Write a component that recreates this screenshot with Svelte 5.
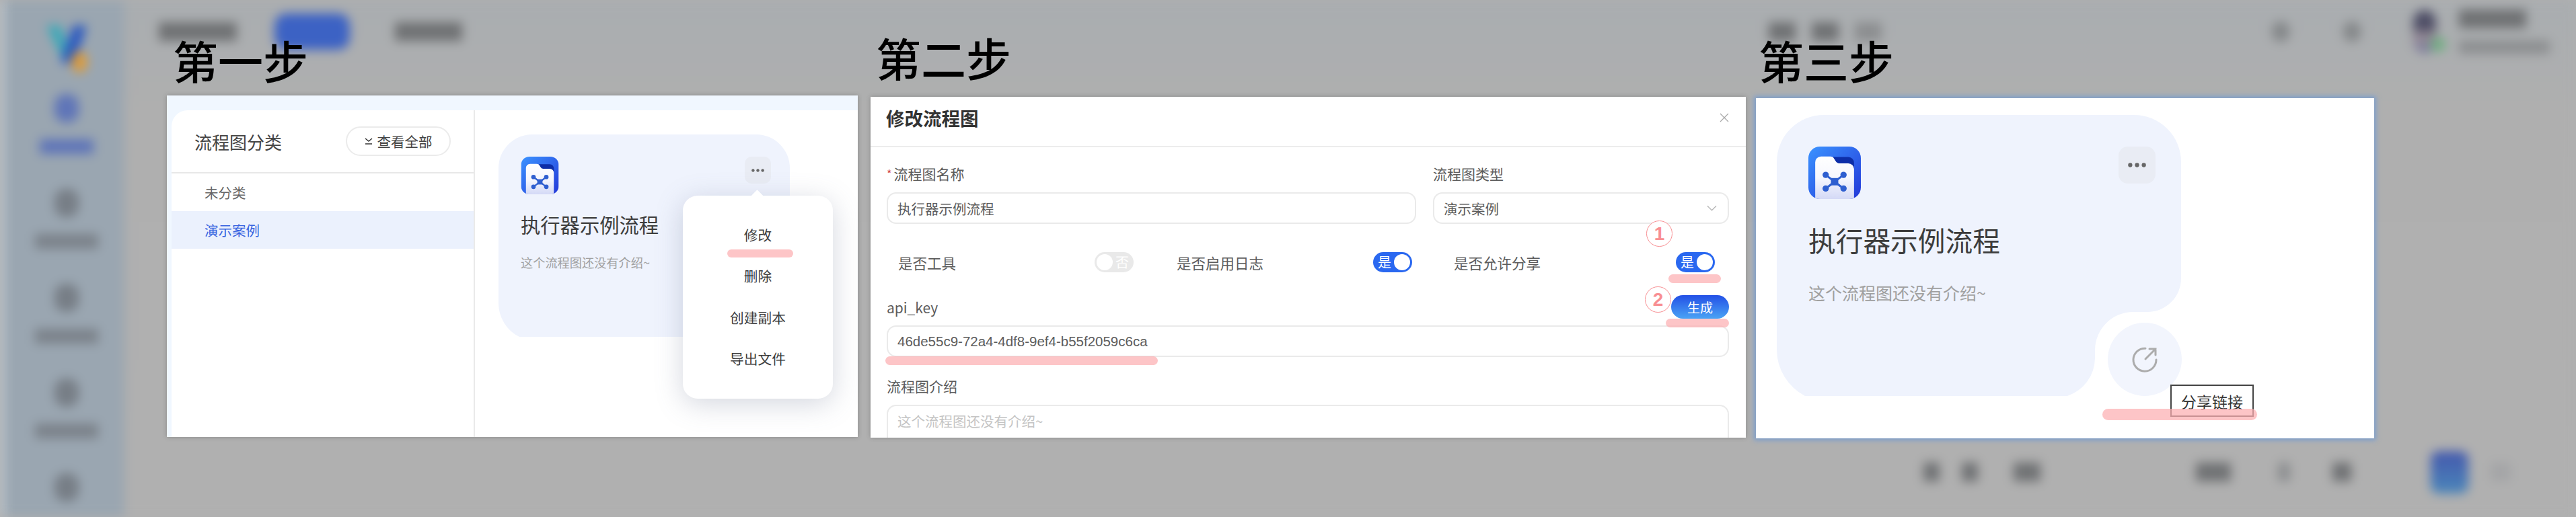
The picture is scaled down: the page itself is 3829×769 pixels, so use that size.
<script>
	const navItems = [
		{ label: '流程图', active: true },
		{ label: '智能体市场', active: false },
		{ label: '数据集', active: false },
		{ label: '知识库管理', active: false },
		{ label: '系统设置', active: false },
	];
	const menuItems = ['修改', '删除', '创建副本', '导出文件'];
	const toggles = [
		{ label: '是否工具', on: false },
		{ label: '是否启用日志', on: true },
		{ label: '是否允许分享', on: true },
	];
</script>

{#snippet flowIcon()}
	<svg class="flow-icon" viewBox="0 0 100 100">
		<defs>
			<linearGradient id="tile" x1="0" y1="0" x2="1" y2="1">
				<stop offset="0" stop-color="#3b93ff" />
				<stop offset="1" stop-color="#2338d8" />
			</linearGradient>
			<linearGradient id="sheet" x1="0" y1="0" x2="0" y2="1">
				<stop offset="0" stop-color="#ffffff" />
				<stop offset="0.5" stop-color="#f6f7fe" />
				<stop offset="1" stop-color="#d4d9f6" />
			</linearGradient>
			<clipPath id="tile-clip"><rect width="100" height="100" rx="22" /></clipPath>
		</defs>
		<g clip-path="url(#tile-clip)">
			<rect width="100" height="100" fill="url(#tile)" />
			<path d="M46 20 h30 a11 11 0 0 1 11 11 v10 H55 z" fill="#0d2ea8" />
			<path d="M13 100 V30 a11 11 0 0 1 11 -11 h18 a8 8 0 0 1 7 4 l3 5 a8 8 0 0 0 7 4 h17 a11 11 0 0 1 11 11 V100 z" fill="url(#sheet)" />
			<path d="M33 54 L67 80 M67 54 L33 80" stroke="#2f5fd0" stroke-width="4" />
			<g fill="#2f5fd0">
				<circle cx="33" cy="54" r="6" />
				<circle cx="67" cy="54" r="6" />
				<circle cx="33" cy="80" r="6" />
				<circle cx="67" cy="80" r="6" />
				<rect x="43" y="60" width="14" height="14" />
			</g>
		</g>
	</svg>
{/snippet}

{#snippet dots()}
	<svg class="dots" viewBox="0 0 24 6"><circle cx="3" cy="3" r="2.8" /><circle cx="12" cy="3" r="2.8" /><circle cx="21" cy="3" r="2.8" /></svg>
{/snippet}

<div class="page">
	<!-- blurred app behind the three steps -->
	<div class="backdrop">
		<aside class="side">
			<svg class="logo" viewBox="0 0 70 76">
				<path d="M5 4 L26 4 L40 46 L30 56 Z" fill="#3aa8b8" />
				<path d="M45 4 L65 4 L46 62 L26 58 Z" fill="#2a58c0" />
				<ellipse cx="54" cy="58" rx="12" ry="16" fill="#dc9c3c" />
			</svg>
			{#each navItems as item}
				<div class="nav" class:active={item.active}>
					<span class="nav-icon"></span>
					<span class="nav-label"></span>
				</div>
			{/each}
		</aside>
		<div class="main">
			<header class="top">
				<span class="blob w116"></span>
				<span class="pill"></span>
				<span class="blob w100"></span>
				<span class="top-mid">
					<span class="blob w40"></span>
					<span class="blob w40"></span>
					<span class="blob w40 faint"></span>
				</span>
				<span class="top-right">
					<span class="tool"></span>
					<span class="tool"></span>
					<span class="avatar"></span>
					<span class="who">
						<span class="blob w100"></span>
						<span class="blob w135 faint"></span>
					</span>
				</span>
			</header>
			<footer class="pager">
				<span class="blob w24"></span>
				<span class="blob w24"></span>
				<span class="blob w40 ml20"></span>
				<span class="gap-a"></span>
				<span class="blob w52"></span>
				<span class="blob w18 faint ml37"></span>
				<span class="blob w28 ml30"></span>
				<span class="gap-b"></span>
				<span class="page-on"></span>
				<span class="blob w30 fainter"></span>
			</footer>
		</div>
	</div>

	<h2 class="step s1">第一步</h2>
	<h2 class="step s2">第二步</h2>
	<h2 class="step s3">第三步</h2>

	<!-- step 1 -->
	<section class="shot one">
		<div class="inner">
			<div class="cats">
				<div class="cats-head">
					<span class="cats-title">流程图分类</span>
					<span class="see-all">
						<svg viewBox="0 0 12 10"><path d="M1 1 L6 5 L11 1 M1 9 H11" fill="none" stroke="#333" stroke-width="1.5" /></svg>
						查看全部
					</span>
				</div>
				<div class="cat">未分类</div>
				<div class="cat on">演示案例</div>
			</div>
			<div class="cards">
				<div class="card">
					<div class="card-top">
						{@render flowIcon()}
						<span class="more">{@render dots()}</span>
					</div>
					<div class="card-title">执行器示例流程</div>
					<div class="card-desc">这个流程图还没有介绍~</div>
				</div>
			</div>
		</div>
		<div class="menu">
			{#each menuItems as item}
				<div class="menu-item">{item}</div>
			{/each}
		</div>
		<span class="mark m-edit"></span>
	</section>

	<!-- step 2 -->
	<section class="shot two">
		<div class="dlg-head">
			<span>修改流程图</span>
			<svg viewBox="0 0 14 14"><path d="M1 1 L13 13 M13 1 L1 13" stroke="#a8a8a8" stroke-width="1.2" /></svg>
		</div>
		<div class="dlg-body">
			<div class="pair">
				<div class="field">
					<div class="lbl"><i>*</i>流程图名称</div>
					<div class="input">执行器示例流程</div>
				</div>
				<div class="field">
					<div class="lbl">流程图类型</div>
					<div class="input select">
						演示案例
						<svg viewBox="0 0 16 9"><path d="M1 1 L8 8 L15 1" fill="none" stroke="#b4b4b4" stroke-width="1.3" /></svg>
					</div>
				</div>
			</div>
			<div class="toggles">
				{#each toggles as t}
					<div class="tog-cell">
						<span>{t.label}</span>
						<span class="switch" class:on={t.on}>
							<span class="txt">{t.on ? '是' : '否'}</span>
							<span class="knob"></span>
						</span>
					</div>
				{/each}
			</div>
			<div class="key-row">
				<span class="lbl">api_key</span>
				<span class="gen">生成</span>
			</div>
			<div class="input">46de55c9-72a4-4df8-9ef4-b55f2059c6ca</div>
			<div class="lbl intro">流程图介绍</div>
			<div class="input area">这个流程图还没有介绍~</div>
		</div>
		<span class="mark m-switch"></span>
		<span class="mark m-gen"></span>
		<span class="mark m-key"></span>
		<span class="num n1">1</span>
		<span class="num n2">2</span>
	</section>

	<!-- step 3 -->
	<section class="shot three">
		<div class="big-card">
			<div class="card-top">
				{@render flowIcon()}
				<span class="more">{@render dots()}</span>
			</div>
			<div class="card-title">执行器示例流程</div>
			<div class="card-desc">这个流程图还没有介绍~</div>
		</div>
		<span class="share">
			<svg viewBox="0 0 38 38">
				<path d="M20 2.2 A17 17 0 1 0 36 19" fill="none" stroke="#acacac" stroke-width="3" stroke-linecap="round" />
				<path d="M20 18 L35 3 M26 3 H35 V12" fill="none" stroke="#acacac" stroke-width="3" stroke-linecap="round" />
			</svg>
		</span>
		<span class="tip">分享链接</span>
		<span class="mark m-share"></span>
	</section>
</div>

<style>
	:global(body) {
		margin: 0;
		background: #b0b0b0;
	}

	.page {
		position: relative;
		width: 3829px;
		height: 769px;
		overflow: hidden;
		font-family: "Noto Sans CJK SC", "Noto Sans", sans-serif;
		color: #333;
	}

	/* backdrop */
	.backdrop {
		display: flex;
		height: 769px;
		filter: blur(8px);
		background: #b0b0b0;
	}

	.side {
		width: 185px;
		height: 769px;
		flex: none;
		box-sizing: border-box;
		background: #9aa6b1;
		display: flex;
		flex-direction: column;
		align-items: center;
		padding: 34px 0 0 6px;
		overflow: hidden;
		border-left: 6px solid #c8d2da;
	}

	.logo {
		width: 70px;
		height: 76px;
		flex: none;
		margin-bottom: 30px;
	}

	.nav {
		height: 141px;
		display: flex;
		flex-direction: column;
		align-items: center;
		gap: 25px;
		flex: none;
	}

	.nav-icon {
		width: 36px;
		height: 42px;
		border-radius: 16px;
		background: #777e86;
	}

	.nav-label {
		width: 94px;
		height: 22px;
		background: #7b828a;
	}

	.nav.active .nav-icon,
	.nav.active .nav-label { background: #5f75b8; }
	.nav.active .nav-label { width: 80px; }

	.main {
		flex: 1;
		display: flex;
		flex-direction: column;
		justify-content: space-between;
		background: linear-gradient(#a9adb0, #afafaf 22%, #b0b0b0);
	}

	.top {
		display: flex;
		align-items: center;
		gap: 62px;
		height: 94px;
		padding: 0 39px 0 51px;
	}

	.blob {
		display: block;
		height: 28px;
		background: #707274;
		flex: none;
	}

	.blob.faint { background: #8c8e90; }
	.blob.fainter { background: #a4a5a7; }
	.w18 { width: 18px; }
	.w24 { width: 24px; }
	.w28 { width: 28px; }
	.w30 { width: 30px; }
	.w40 { width: 40px; }
	.w52 { width: 52px; }
	.w100 { width: 100px; }
	.w116 { width: 116px; }
	.w135 { width: 135px; height: 20px; }
	.ml20 { margin-left: 20px; }
	.ml30 { margin-left: 30px; }
	.ml37 { margin-left: 37px; }

	.pill {
		width: 112px;
		height: 54px;
		border-radius: 18px;
		background: #3c62c4;
		flex: none;
		margin-left: -6px;
		margin-right: 5px;
	}

	.top-mid {
		display: flex;
		gap: 24px;
		margin-left: 1880px;
	}

	.top-right {
		display: flex;
		align-items: center;
		margin-left: auto;
	}

	.tool {
		width: 26px;
		height: 30px;
		border-radius: 12px;
		background: #85888a;
		margin-right: 80px;
	}

	.avatar {
		position: relative;
		width: 34px;
		height: 64px;
		border-radius: 17px;
		background: linear-gradient(#4e4e66 40%, #9a8e98 60%, #76789c);
		margin: 0 34px 0 -2px;
	}

	.avatar::after {
		content: "";
		position: absolute;
		left: 26px;
		top: 40px;
		width: 22px;
		height: 22px;
		border-radius: 50%;
		background: #6fae80;
	}

	.who {
		display: flex;
		flex-direction: column;
		gap: 18px;
	}

	.pager {
		display: flex;
		align-items: center;
		gap: 33px;
		height: 134px;
		padding-left: 2674px;
	}

	.gap-a { width: 165px; }
	.gap-b { width: 52px; }

	.page-on {
		width: 56px;
		height: 63px;
		background: linear-gradient(#4458ad, #4a86ba);
		border-radius: 12px;
	}

	/* headings */
	.step {
		position: absolute;
		margin: 0;
		font-size: 67px;
		line-height: 78px;
		font-weight: 500;
		color: #000;
	}

	.s1 { left: 257px; top: 50px; }
	.s2 { left: 1302px; top: 46px; }
	.s3 { left: 2614px; top: 50px; }

	/* pasted screenshots */
	.shot {
		position: absolute;
		background: #fff;
		box-shadow: 0 0 6px rgba(60, 60, 60, 0.35);
		box-sizing: border-box;
	}

	.mark {
		position: absolute;
		background: rgba(252, 175, 178, 0.72);
		border-radius: 7px;
	}

	/* step 1 */
	.one {
		left: 248px;
		top: 142px;
		width: 1027px;
		height: 508px;
		background: #f0f7ff;
		padding: 22px 0 0 7px;
	}

	.inner {
		display: flex;
		height: 100%;
		background: #fff;
		border-top-left-radius: 24px;
	}

	.cats {
		width: 451px;
		flex: none;
		box-sizing: border-box;
		border-right: 2px solid #eaeaea;
	}

	.cats-head {
		height: 94px;
		box-sizing: border-box;
		display: flex;
		align-items: center;
		justify-content: space-between;
		padding: 0 34px;
		border-bottom: 2px solid #e8e8e8;
	}

	.cats-title { font-size: 26px; color: #444; }

	.see-all {
		width: 156px;
		height: 44px;
		box-sizing: border-box;
		border: 2px solid #ebebeb;
		border-radius: 22px;
		display: flex;
		align-items: center;
		justify-content: center;
		gap: 7px;
		font-size: 20.5px;
		color: #444;
	}

	.see-all svg { width: 12px; height: 10px; }

	.cat {
		height: 56px;
		display: flex;
		align-items: center;
		padding-left: 49px;
		font-size: 20.5px;
		color: #666;
	}

	.cat.on {
		background: #ebf1fd;
		color: #3763e0;
	}

	.cards {
		flex: 1;
		padding: 36px 0 0 35px;
	}

	.card {
		width: 433px;
		height: 301px;
		box-sizing: border-box;
		padding: 33px 28px 0 33px;
		background: #eff3fd;
		clip-path: path("M50 0 H383 A50 50 0 0 1 433 50 V301 H31 A56 56 0 0 1 0 251 V50 A50 50 0 0 1 50 0 Z");
	}

	.card-top {
		display: flex;
		justify-content: space-between;
	}

	.flow-icon {
		display: block;
		width: 57px;
		height: 56px;
	}

	.more {
		width: 39px;
		height: 40px;
		border-radius: 10px;
		background: #e9ecf4;
		display: flex;
		align-items: center;
		justify-content: center;
	}

	.dots {
		width: 19px;
		height: 5px;
		fill: #666;
	}

	.card-title {
		font-size: 29.3px;
		line-height: 40px;
		margin-top: 24px;
		color: #3c3c3c;
		white-space: nowrap;
	}

	.card-desc {
		font-size: 18.2px;
		line-height: 24px;
		margin-top: 25px;
		color: #a0a0a0;
		white-space: nowrap;
	}

	.menu {
		position: absolute;
		left: 767px;
		top: 149px;
		width: 223px;
		height: 302px;
		box-sizing: border-box;
		padding-top: 28px;
		border-radius: 22px;
		background: #fff;
		box-shadow: 0 8px 40px rgba(100, 110, 140, 0.28);
		display: flex;
		flex-direction: column;
		align-items: center;
	}

	.menu::before {
		content: "";
		position: absolute;
		top: -6px;
		left: 104px;
		width: 13px;
		height: 13px;
		background: #fff;
		transform: rotate(45deg);
	}

	.menu-item {
		position: relative;
		height: 61.3px;
		line-height: 61.3px;
		font-size: 20.7px;
		color: #3c3c3c;
	}

	.m-edit { left: 833px; top: 229px; width: 98px; height: 12px; }

	/* step 2 */
	.two {
		left: 1294px;
		top: 144px;
		width: 1301px;
		height: 507px;
		overflow: hidden;
	}

	.dlg-head {
		height: 75px;
		box-sizing: border-box;
		border-bottom: 2px solid #ececec;
		display: flex;
		align-items: center;
		justify-content: space-between;
		padding: 0 25px 11px 23px;
		font-size: 27.5px;
		font-weight: 700;
		color: #333;
	}

	.dlg-head svg { width: 14px; height: 16px; }

	.dlg-body {
		padding: 24px 25px 0 24px;
	}

	.pair {
		display: grid;
		grid-template-columns: 787px 440px;
		gap: 25px;
	}

	.lbl {
		font-size: 21px;
		line-height: 30px;
		color: #5c5c5c;
	}

	.lbl i {
		font-style: normal;
		color: #d04545;
		font-size: 16px;
		margin-right: 3px;
		vertical-align: 2px;
	}

	.input {
		height: 47px;
		box-sizing: border-box;
		border: 2px solid #eaeaea;
		border-radius: 14px;
		padding: 0 14px;
		display: flex;
		align-items: center;
		font-size: 20.5px;
		color: #5c5c5c;
		margin-top: 13px;
	}

	.select { justify-content: space-between; padding-right: 16px; }
	.select svg { width: 15px; height: 9px; }

	.toggles {
		display: flex;
		margin-top: 42px;
		height: 30px;
		padding-left: 17px;
	}

	.tog-cell {
		flex: none;
		display: flex;
		align-items: center;
		justify-content: space-between;
		font-size: 21.5px;
		color: #5c5c5c;
	}

	.tog-cell:nth-child(1) { width: 350px; }
	.tog-cell:nth-child(2) { width: 350px; margin-left: 64px; }
	.tog-cell:nth-child(3) { width: 388px; margin-left: 62px; }

	.switch {
		width: 58px;
		height: 30px;
		box-sizing: border-box;
		border-radius: 15px;
		background: #e9e9e9;
		display: flex;
		align-items: center;
		flex-direction: row-reverse;
		justify-content: space-between;
		padding: 0 3px;
		color: #fff;
		font-size: 20px;
	}

	.switch.on {
		background: #2a68f0;
		flex-direction: row;
		padding-left: 7px;
	}

	.switch:not(.on) .txt { margin-right: 4px; }

	.txt { line-height: 30px; }

	.knob {
		width: 24px;
		height: 24px;
		border-radius: 50%;
		background: #fff;
	}

	.key-row {
		display: flex;
		align-items: center;
		justify-content: space-between;
		margin-top: 34px;
		height: 35px;
	}

	.gen {
		width: 86px;
		height: 35px;
		border-radius: 18px;
		background: linear-gradient(#2350e6, #4aa3f5);
		color: #fff;
		font-size: 19px;
		display: flex;
		align-items: center;
		justify-content: center;
	}

	.key-row + .input { margin-top: 10px; font-family: "Liberation Sans", sans-serif; }

	.intro { margin-top: 28px; }

	.area {
		height: 90px;
		align-items: flex-start;
		padding-top: 7px;
		color: #c4c4c4;
		margin-top: 13px;
	}

	.num {
		position: absolute;
		width: 39px;
		height: 39px;
		box-sizing: border-box;
		border: 1.5px solid #f88f93;
		border-radius: 50%;
		color: #f88f93;
		font-family: "Liberation Sans", sans-serif;
		font-weight: 700;
		font-size: 28px;
		display: flex;
		align-items: center;
		justify-content: center;
		background: #fff;
	}

	.n1 { left: 1153px; top: 184px; }
	.n2 { left: 1151px; top: 282px; }

	.m-switch { left: 1186px; top: 264px; width: 78px; height: 13px; }
	.m-gen { left: 1182px; top: 330px; width: 94px; height: 13px; }
	.m-key { left: 22px; top: 386px; width: 405px; height: 13px; }

	/* step 3 */
	.three {
		left: 2610px;
		top: 146px;
		width: 919px;
		height: 506px;
		box-shadow: 0 0 7px 3px #7d9fcc;
		padding: 25px 0 0 31px;
	}

	.big-card {
		width: 601px;
		height: 418px;
		box-sizing: border-box;
		padding: 47px 38px 0 47px;
		background: #eff3fd;
		clip-path: path("M70 0 H531 A70 70 0 0 1 601 70 V243 A50 50 0 0 1 551 293 H530 A57 57 0 0 0 473 350 V362 A60 60 0 0 1 432 418 H42 A78 78 0 0 1 0 349 V70 A70 70 0 0 1 70 0 Z");
	}

	.big-card .flow-icon { width: 78px; height: 78px; }

	.big-card .more {
		width: 55px;
		height: 55px;
		border-radius: 14px;
	}

	.big-card .dots { width: 27px; height: 7px; }

	.big-card .card-title {
		font-size: 40.7px;
		line-height: 50px;
		margin-top: 36px;
	}

	.big-card .card-desc {
		font-size: 25px;
		line-height: 30px;
		margin-top: 38px;
	}

	.share {
		position: absolute;
		left: 523px;
		top: 334px;
		width: 110px;
		height: 109px;
		border-radius: 50%;
		background: #f2f5fd;
		display: flex;
		align-items: center;
		justify-content: center;
	}

	.share svg { width: 38px; height: 38px; }

	.tip {
		position: absolute;
		left: 616px;
		top: 426px;
		width: 124px;
		height: 48px;
		box-sizing: border-box;
		border: 2px solid #444;
		background: #fff;
		display: flex;
		justify-content: center;
		font-size: 23px;
		line-height: 46px;
		color: #333;
	}

	.m-share { left: 515px; top: 462px; width: 230px; height: 17px; border-radius: 9px; }
</style>
